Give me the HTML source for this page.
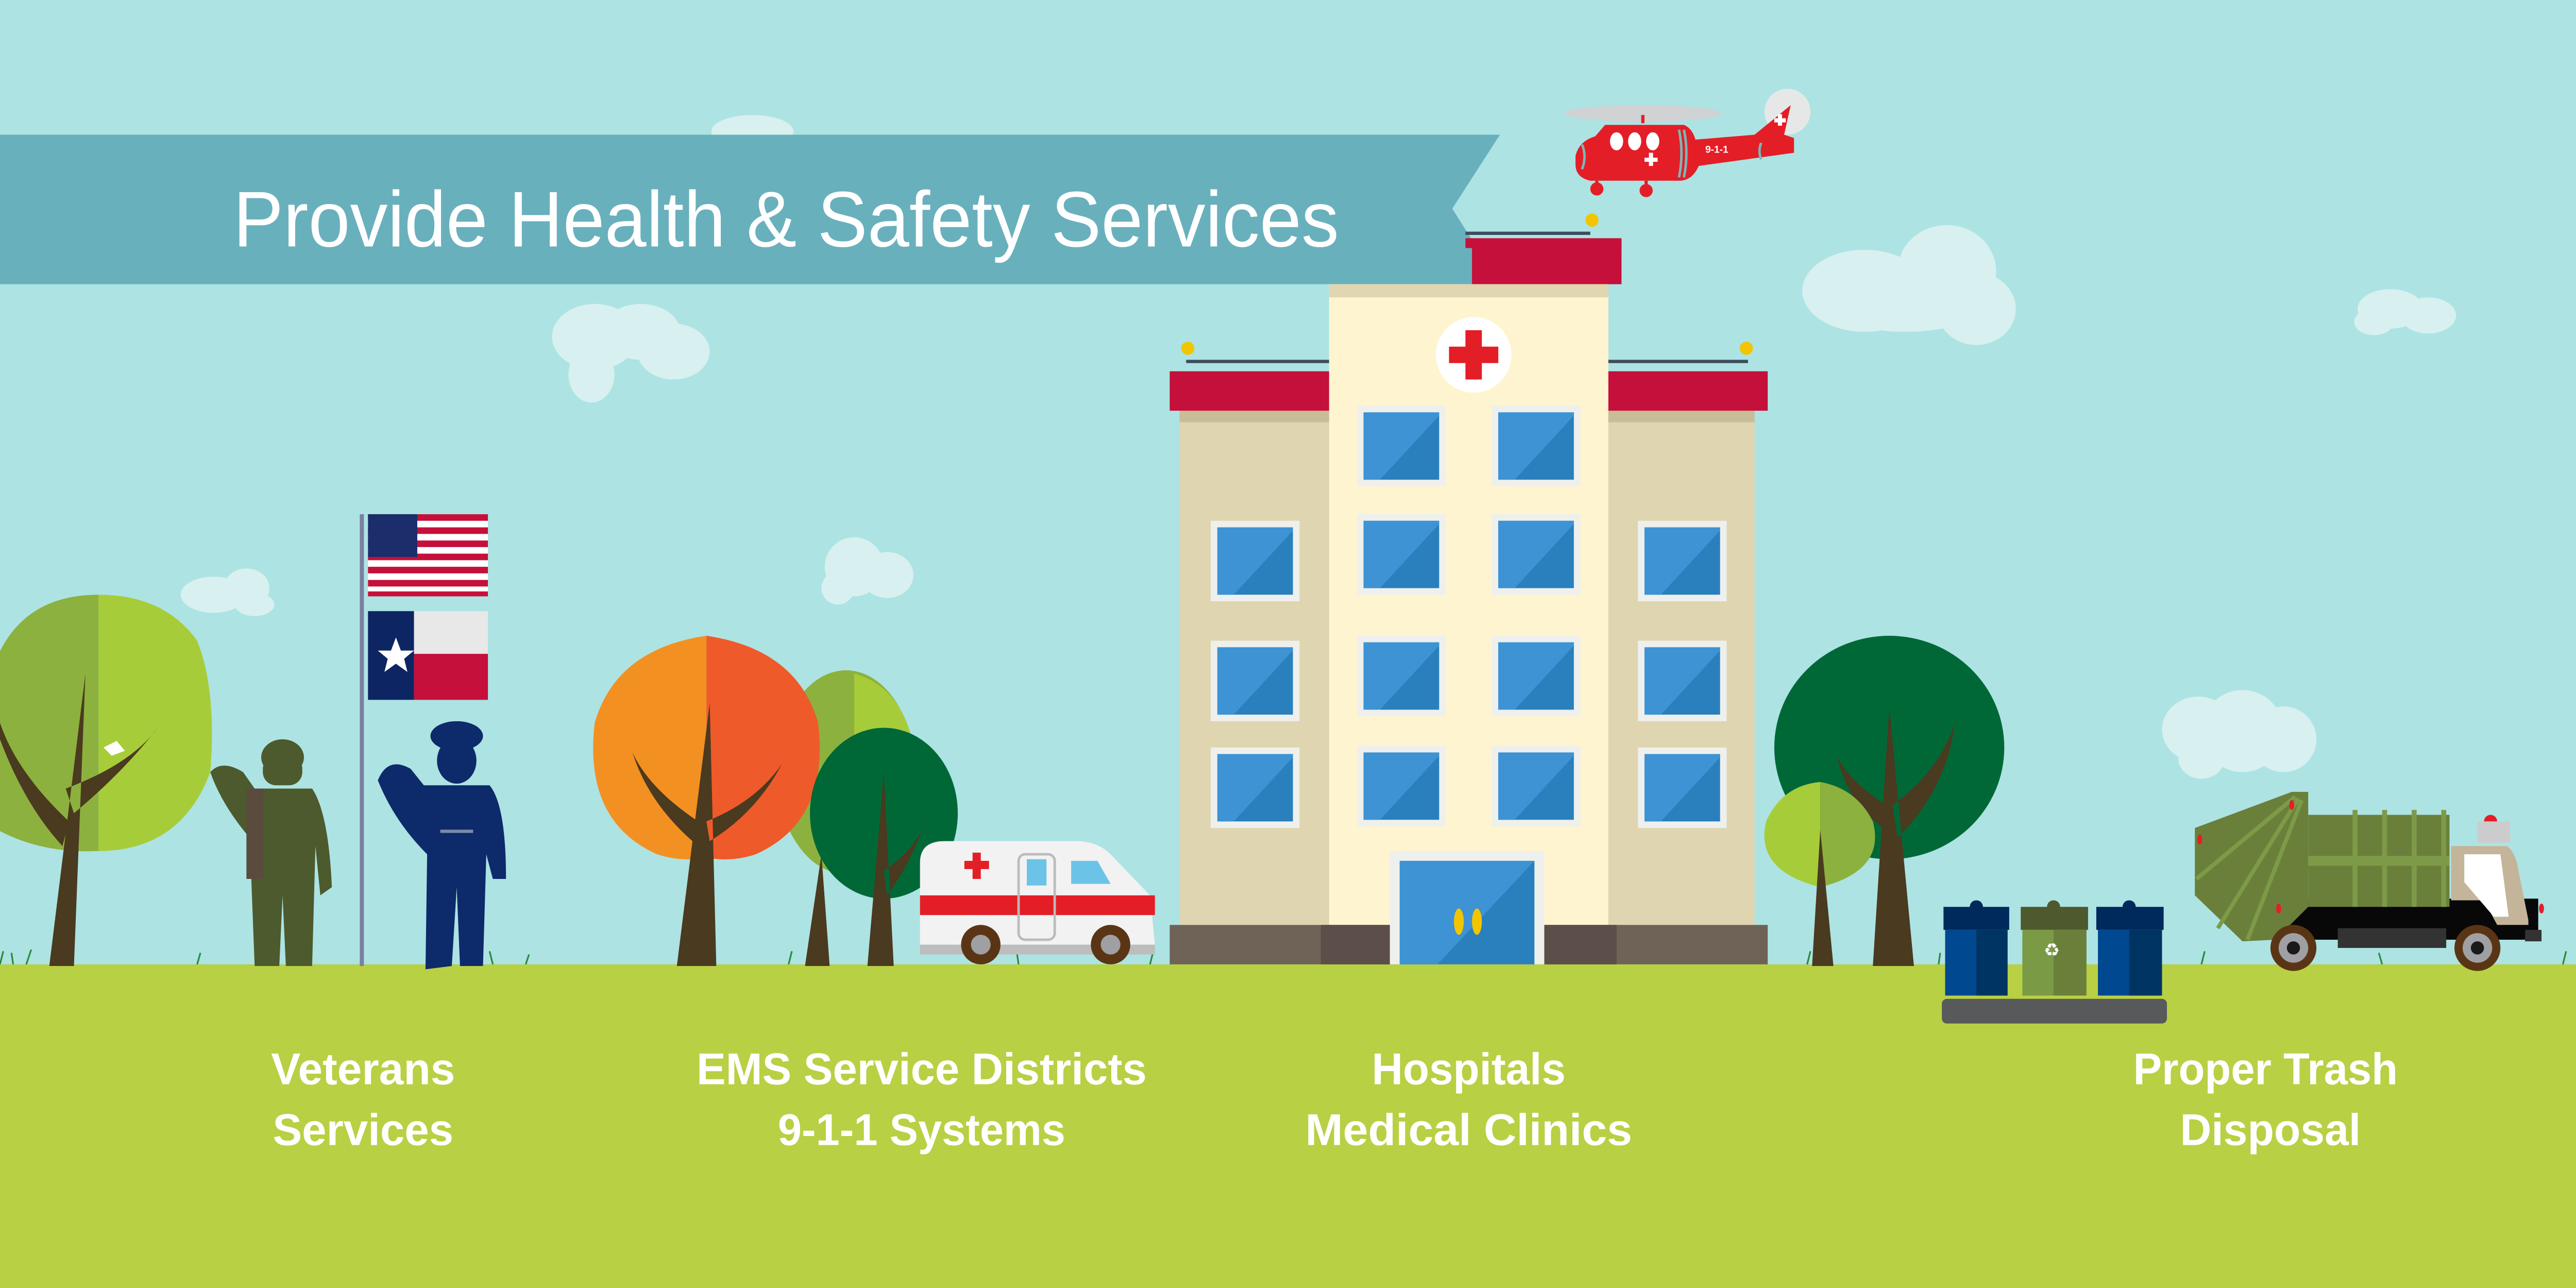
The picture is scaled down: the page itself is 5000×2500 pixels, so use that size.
<!DOCTYPE html>
<html><head><meta charset="utf-8"><style>
html,body{margin:0;padding:0;background:#ade3e3;}
svg{display:block;}
text{font-family:"Liberation Sans",sans-serif;}
</style></head><body>
<svg width="5000" height="2500" viewBox="0 0 1568 784" xmlns="http://www.w3.org/2000/svg">
<rect width="1568" height="784" fill="#ade3e3"/>
<!-- clouds -->
<g fill="#d8f0f0">
<ellipse cx="458" cy="80" rx="25" ry="10"/>
<ellipse cx="362" cy="205" rx="26" ry="20"/><ellipse cx="390" cy="202" rx="24" ry="17"/><ellipse cx="410" cy="214" rx="22" ry="17"/><ellipse cx="360" cy="228" rx="14" ry="17"/>
<ellipse cx="130" cy="362" rx="20" ry="11"/><ellipse cx="150" cy="358" rx="14" ry="12"/><ellipse cx="155" cy="368" rx="12" ry="7"/>
<ellipse cx="520" cy="345" rx="18" ry="18"/><ellipse cx="540" cy="350" rx="16" ry="14"/><ellipse cx="510" cy="358" rx="10" ry="10"/>
<ellipse cx="1135" cy="177" rx="38" ry="25"/><ellipse cx="1185" cy="165" rx="30" ry="28"/><ellipse cx="1203" cy="188" rx="24" ry="22"/><ellipse cx="1160" cy="190" rx="40" ry="12"/>
<ellipse cx="1455" cy="188" rx="20" ry="12"/><ellipse cx="1478" cy="192" rx="17" ry="11"/><ellipse cx="1445" cy="196" rx="12" ry="8"/>
<ellipse cx="1338" cy="444" rx="22" ry="20"/><ellipse cx="1365" cy="445" rx="25" ry="25"/><ellipse cx="1390" cy="450" rx="20" ry="20"/><ellipse cx="1340" cy="462" rx="14" ry="12"/>
</g>
<!-- banner -->
<polygon points="0,82 913,82 884,127 913,173 0,173" fill="#69b0bd"/>
<text x="142" y="150" font-size="48" fill="#fff" textLength="673" lengthAdjust="spacingAndGlyphs">Provide Health &amp; Safety Services</text>
<!-- ground -->
<rect x="0" y="587" width="1568" height="197" fill="#b8d043"/>
<g stroke="#2c8a3a" stroke-width="1">
<path d="M0 587 l2 -8 M8 587 l-1 -7 M16 587 l3 -9 M120 587 l2 -7 M300 587 l-2 -8 M320 587 l2 -6 M480 587 l2 -8 M620 587 l-1 -7 M700 587 l2 -8 M1100 587 l2 -8 M1180 587 l1 -7 M1340 587 l2 -8 M1450 587 l-2 -7 M1560 587 l2 -8"/>
</g>
<!-- hospital -->
<rect x="896" y="147" width="91" height="26" fill="#c4103a"/>
<rect x="892" y="145" width="95" height="6" fill="#c4103a"/>
<line x1="892" y1="142" x2="968" y2="142" stroke="#3d4d5c" stroke-width="2"/>
<circle cx="969" cy="134" r="4" fill="#f2c500"/>
<rect x="809" y="173" width="170" height="390" fill="#fff4d0"/>
<rect x="809" y="173" width="170" height="8" fill="#e0d6b0"/>
<rect x="718" y="250" width="91" height="313" fill="#dfd5b0"/><rect x="979" y="250" width="89" height="313" fill="#dfd5b0"/>
<rect x="718" y="250" width="91" height="7" fill="#c8bd98"/><rect x="979" y="250" width="89" height="7" fill="#c8bd98"/>
<rect x="712" y="226" width="97" height="24" fill="#c4103a"/><rect x="979" y="226" width="97" height="24" fill="#c4103a"/>
<line x1="722" y1="220" x2="809" y2="220" stroke="#3d4d5c" stroke-width="2"/><line x1="979" y1="220" x2="1064" y2="220" stroke="#3d4d5c" stroke-width="2"/>
<circle cx="723" cy="212" r="4" fill="#f2c500"/><circle cx="1063" cy="212" r="4" fill="#f2c500"/>
<circle cx="897" cy="216" r="23" fill="#fff"/>
<rect x="892" y="201" width="10" height="30" fill="#e41e26"/><rect x="882" y="211" width="30" height="10" fill="#e41e26"/>
<g>
<defs><g id="w"><rect x="0" y="0" width="54" height="49" fill="#eef0ee"/><rect x="4" y="4" width="46" height="41" fill="#2a7fbd"/><polygon points="4,4 50,4 50,6 14,45 4,45" fill="#3d93d3"/></g></defs>
<use href="#w" x="826" y="247"/><use href="#w" x="908" y="247"/>
<use href="#w" x="826" y="313"/><use href="#w" x="908" y="313"/>
<use href="#w" x="826" y="387"/><use href="#w" x="908" y="387"/>
<use href="#w" x="826" y="454"/><use href="#w" x="908" y="454"/>
<use href="#w" x="737" y="317"/><use href="#w" x="997" y="317"/>
<use href="#w" x="737" y="390"/><use href="#w" x="997" y="390"/>
<use href="#w" x="737" y="455"/><use href="#w" x="997" y="455"/>
</g>
<rect x="712" y="563" width="364" height="24" fill="#6f6257"/>
<rect x="804" y="563" width="44" height="24" fill="#5c4e48"/><rect x="940" y="563" width="44" height="24" fill="#5c4e48"/>
<rect x="846" y="518" width="94" height="69" fill="#eef0ee"/>
<rect x="852" y="524" width="82" height="63" fill="#2a7fbd"/>
<polygon points="852,524 934,524 875,587 852,587" fill="#3d93d3"/>
<ellipse cx="888" cy="561" rx="3" ry="8" fill="#f2c500"/><ellipse cx="899" cy="561" rx="3" ry="8" fill="#f2c500"/>
<!-- helicopter -->
<circle cx="1088" cy="68" r="14" fill="#e6e8e8"/>
<ellipse cx="1000" cy="69" rx="48" ry="5" fill="#d0d2d3"/>
<rect x="999" y="70" width="2" height="5" fill="#e41e26"/>
<path d="M977 76 L1025 76 Q1030 78 1032 85 L1068 82 L1090 64 L1086 82 L1092 84 L1092 93 L1034 101 Q1030 110 1022 110 L968 110 Q959 108 959 100 L959 95 Q961 86 971 83 Z" fill="#e41e26"/>
<ellipse cx="984" cy="86" rx="4" ry="5.5" fill="#fff"/><ellipse cx="995" cy="86" rx="4" ry="5.5" fill="#fff"/><ellipse cx="1006" cy="86" rx="4" ry="5.5" fill="#fff"/>
<rect x="1001" y="96" width="8" height="2.5" fill="#fff"/><rect x="1003.7" y="93" width="2.5" height="8" fill="#fff"/>
<rect x="1080" y="72" width="7" height="2.5" fill="#fff"/><rect x="1082.2" y="69.5" width="2.5" height="7" fill="#fff"/>
<g stroke="#7ab8b8" stroke-width="1.5" fill="none"><path d="M1022 79 Q1025 93 1022 108"/><path d="M1025 79 Q1028 93 1025 108"/><path d="M963 88 Q966 95 963 103"/><path d="M1072 87 Q1070 92 1072 97"/></g>
<text x="1038" y="93" font-size="6" fill="#fff" font-weight="bold">9-1-1</text>
<rect x="971" y="110" width="2" height="5" fill="#e41e26"/><rect x="1001" y="110" width="2" height="5" fill="#e41e26"/>
<circle cx="972" cy="115" r="4" fill="#e41e26"/><circle cx="1002" cy="116" r="4" fill="#e41e26"/>
<!-- trees left -->
<path d="M60 362 Q0 362 -10 430 L-10 500 Q20 520 60 518 Z" fill="#8db13e"/>
<path d="M60 362 Q100 362 120 390 Q132 420 128 470 Q110 518 60 518 Z" fill="#a7cc39"/>
<path d="M30 588 L45 588 L52 410 Z M40 480 Q80 465 96 443 Q75 470 45 495Z M42 500 Q10 470 0 440 L0 450 Q15 490 38 515Z" fill="#4a3a1f"/>
<path d="M63 455 l8 -4 l5 6 l-8 3Z" fill="#fff"/>
<!-- flagpole & flags -->
<rect x="219" y="313" width="2.5" height="275" fill="#7a7fa0"/>
<g>
<rect x="224" y="313" width="73" height="50" fill="#fff"/>
<g fill="#c4103a"><rect x="224" y="313" width="73" height="4"/><rect x="224" y="321" width="73" height="4"/><rect x="224" y="329" width="73" height="4"/><rect x="224" y="337" width="73" height="4"/><rect x="224" y="345" width="73" height="4"/><rect x="224" y="353" width="73" height="4"/><rect x="224" y="360" width="73" height="3"/></g>
<rect x="224" y="313" width="30" height="26" fill="#1b2d6b"/>
</g>
<rect x="224" y="372" width="28" height="54" fill="#0d2563"/>
<rect x="252" y="372" width="45" height="26" fill="#e8e8e8"/><rect x="252" y="398" width="45" height="28" fill="#c4103a"/>
<polygon points="241,388 244,396 252,396 246,401 248,409 241,404 234,409 236,401 230,396 238,396" fill="#fff"/>
<!-- green soldier -->
<g fill="#4c5a2d">
<ellipse cx="172" cy="461" rx="13" ry="11"/>
<rect x="160" y="460" width="24" height="18" rx="8"/>
<path d="M155 480 L190 480 Q200 495 202 540 L195 545 L192 515 L190 588 L174 588 L172 545 L170 588 L155 588 L152 510 Q135 490 128 470 Q135 462 148 470 Z"/>
</g>
<rect x="150" y="480" width="10" height="55" fill="#5b4a3e"/>
<!-- navy officer -->
<g fill="#0d2a6b">
<ellipse cx="278" cy="448" rx="16" ry="9"/>
<ellipse cx="278" cy="463" rx="12" ry="14"/>
<path d="M258 478 L298 478 Q308 490 308 535 L300 535 L296 520 L294 588 L280 588 L278 540 L275 588 L259 590 L260 520 Q240 500 230 475 Q236 460 250 468 Z"/>
</g>
<rect x="268" y="505" width="20" height="2" fill="#7a8aa8"/>
<!-- orange tree & trees -->
<ellipse cx="515" cy="470" rx="42" ry="62" fill="#8db13e"/>
<path d="M520 410 Q555 420 558 470 Q555 520 520 530Z" fill="#a7cc39"/>
<path d="M430 387 Q375 395 362 440 Q355 500 400 520 Q415 525 430 522 Z" fill="#f39022"/>
<path d="M430 387 Q485 395 498 440 Q505 500 460 520 Q445 525 430 522 Z" fill="#ef5a2a"/>
<path d="M412 588 L436 588 L432 428 Z M430 500 Q460 488 476 465 Q460 495 432 512Z M425 500 Q395 480 385 458 Q395 490 425 515Z" fill="#4a3a1f"/>
<path d="M490 588 L505 588 L500 520Z" fill="#4a3a1f"/>
<ellipse cx="538" cy="495" rx="45" ry="52" fill="#006837"/>
<path d="M528 588 L544 588 L538 470 Z M538 530 Q560 515 565 495 Q555 525 540 545Z" fill="#4a3a1f"/>
<!-- ambulance -->
<path d="M560 565 L560 525 Q560 512 575 512 L655 512 Q668 512 676 520 L700 545 L703 575 L560 575Z" fill="#f2f2f2"/>
<rect x="560" y="545" width="143" height="12" fill="#e41e26"/>
<rect x="560" y="575" width="143" height="6" fill="#bdbdbd"/>
<rect x="620" y="520" width="22" height="52" rx="4" fill="none" stroke="#bbb" stroke-width="1.5"/>
<rect x="625" y="523" width="12" height="16" fill="#6cc3e8"/>
<path d="M652 524 L668 524 L676 538 L652 538Z" fill="#6cc3e8"/>
<rect x="592" y="519" width="5" height="16" fill="#e41e26"/><rect x="587" y="524" width="15" height="5" fill="#e41e26"/>
<circle cx="597" cy="575" r="12" fill="#5a3515"/><circle cx="597" cy="575" r="6" fill="#9fa0a4"/>
<circle cx="676" cy="575" r="12" fill="#5a3515"/><circle cx="676" cy="575" r="6" fill="#9fa0a4"/>
<!-- right trees -->
<ellipse cx="1150" cy="455" rx="70" ry="68" fill="#006837"/>
<path d="M1140 588 L1165 588 L1150 430 Z M1152 490 Q1180 470 1190 440 Q1185 480 1155 510Z M1148 490 Q1125 475 1118 460 Q1125 490 1148 505Z" fill="#4a3a1f"/>
<path d="M1108 476 Q1085 478 1075 500 Q1068 530 1108 540 Z" fill="#a7cc39"/>
<path d="M1108 476 Q1130 480 1140 500 Q1148 530 1108 540 Z" fill="#8db13e"/>
<path d="M1103 588 L1116 588 L1108 505Z" fill="#4a3a1f"/>
<!-- bins -->
<g>
<rect x="1183" y="552" width="40" height="14" fill="#002a5c"/><circle cx="1203" cy="552" r="4" fill="#002a5c"/>
<rect x="1184" y="566" width="38" height="40" fill="#00488f"/><rect x="1203" y="566" width="19" height="40" fill="#003563"/>
<rect x="1230" y="552" width="41" height="14" fill="#4e5a2e"/><circle cx="1250" cy="552" r="4" fill="#4e5a2e"/>
<rect x="1231" y="566" width="39" height="40" fill="#7a9a45"/><rect x="1250" y="566" width="20" height="40" fill="#6a803a"/>
<text x="1244" y="582" font-size="11" fill="#fff">♻</text>
<rect x="1276" y="552" width="41" height="14" fill="#002a5c"/><circle cx="1296" cy="552" r="4" fill="#002a5c"/>
<rect x="1277" y="566" width="39" height="40" fill="#00488f"/><rect x="1296" y="566" width="20" height="40" fill="#003563"/>
<rect x="1182" y="608" width="137" height="15" rx="3" fill="#58595b"/>
</g>
<!-- truck -->
<rect x="1365" y="547" width="180" height="25" fill="#080808"/>
<rect x="1423" y="565" width="66" height="12" fill="#333"/>
<rect x="1537" y="566" width="10" height="7" fill="#333"/>
<path d="M1336 504 L1395 482 L1405 482 L1405 552 L1385 572 L1365 573 L1336 545Z" fill="#6a803a"/>
<g stroke="#7d9a48" stroke-width="2.5" fill="none"><path d="M1337 535 L1397 485"/><path d="M1350 565 L1399 486"/><path d="M1368 572 L1401 487"/></g>
<rect x="1405" y="496" width="86" height="56" fill="#6a803a"/>
<rect x="1405" y="521" width="86" height="6" fill="#7d9a48"/>
<g fill="#7d9a48"><rect x="1432" y="493" width="3" height="59"/><rect x="1450" y="493" width="3" height="59"/><rect x="1468" y="493" width="3" height="59"/><rect x="1486" y="493" width="3" height="59"/></g>
<path d="M1492 515 L1526 515 Q1530 518 1532 525 L1539 560 L1539 563 L1520 563 L1512 548 L1492 548Z" fill="#c4b49a"/>
<path d="M1500 520 L1522 520 L1527 558 L1518 558 L1500 537Z" fill="#fff"/>
<rect x="1508" y="500" width="20" height="13" fill="#ccc"/>
<path d="M1512 500 a4 4 0 0 1 8 0Z" fill="#e41e26"/>
<circle cx="1396" cy="577" r="14" fill="#5a3515"/><circle cx="1396" cy="577" r="9" fill="#9fa0a4"/><circle cx="1396" cy="577" r="4" fill="#1a1a1a"/>
<circle cx="1508" cy="577" r="14" fill="#5a3515"/><circle cx="1508" cy="577" r="9" fill="#9fa0a4"/><circle cx="1508" cy="577" r="4" fill="#1a1a1a"/>
<g fill="#e41e26"><ellipse cx="1339" cy="511" rx="1.5" ry="3"/><ellipse cx="1395" cy="490" rx="1.5" ry="3"/><ellipse cx="1387" cy="553" rx="1.5" ry="3"/><ellipse cx="1547" cy="553" rx="1.5" ry="3"/></g>
<!-- labels -->
<g font-weight="bold" font-size="27" fill="#fff" text-anchor="middle">
<text x="221" y="660" textLength="112" lengthAdjust="spacingAndGlyphs">Veterans</text>
<text x="221" y="697" textLength="110" lengthAdjust="spacingAndGlyphs">Services</text>
<text x="561" y="660" textLength="274" lengthAdjust="spacingAndGlyphs">EMS Service Districts</text>
<text x="561" y="697" textLength="175" lengthAdjust="spacingAndGlyphs">9-1-1 Systems</text>
<text x="894" y="660" textLength="118" lengthAdjust="spacingAndGlyphs">Hospitals</text>
<text x="894" y="697" textLength="199" lengthAdjust="spacingAndGlyphs">Medical Clinics</text>
<text x="1379" y="660" textLength="161" lengthAdjust="spacingAndGlyphs">Proper Trash</text>
<text x="1382" y="697" textLength="110" lengthAdjust="spacingAndGlyphs">Disposal</text>
</g>
</svg>
</body></html>
